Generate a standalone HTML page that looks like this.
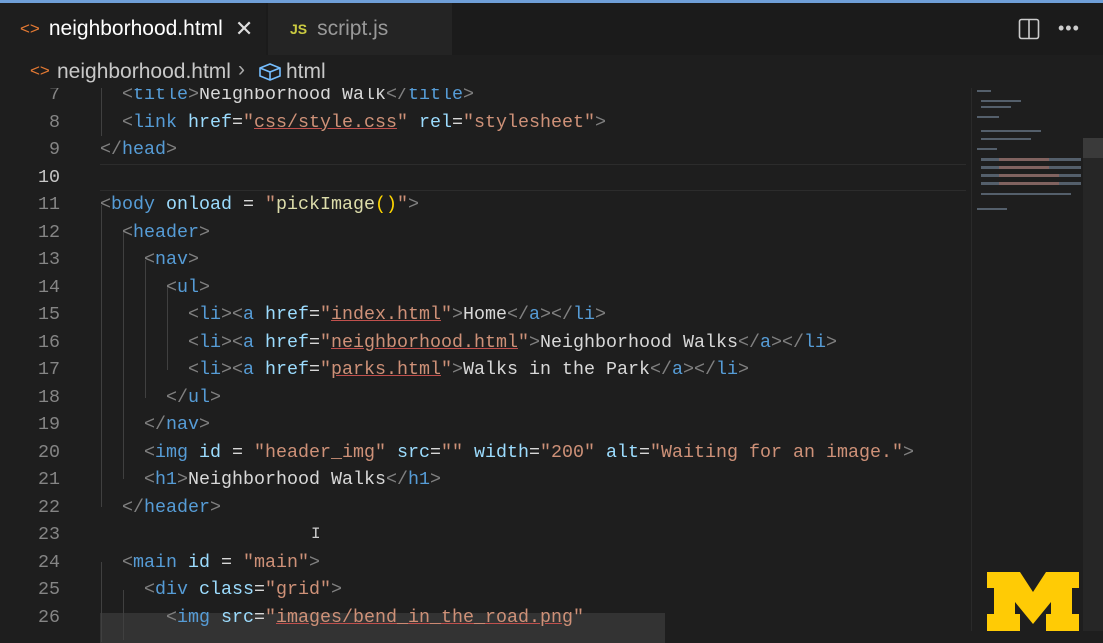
<!DOCTYPE html>
<html><head><meta charset="utf-8"><style>
*{margin:0;padding:0;box-sizing:border-box}
body{width:1103px;height:631px;overflow:hidden;background:#1e1e1e;position:relative;font-family:"Liberation Sans",sans-serif}
#top{position:absolute;left:0;top:0;width:1103px;height:3px;background:#6f9fd8}
#tabs{position:absolute;left:0;top:3px;width:1103px;height:52px;background:#1b1b1b}
.tab{position:absolute;top:0;height:52px;display:flex;align-items:center;font-size:21px}
#code{position:absolute;left:0;top:81px;width:970px;height:560px;font-family:"Liberation Mono",monospace;font-size:18.33px}
.l{position:absolute;left:0;height:27.5px;line-height:27.5px;white-space:pre;width:970px}
.n{position:absolute;left:0;width:60px;text-align:right;color:#858585}
.c{position:absolute;left:100px;color:#d8d8d8}
.b{color:#808080}.t{color:#569cd6}.a{color:#9cdcfe}.s{color:#ce9178}.f{color:#dcdcaa}.p{color:#ffd700}
.u{text-decoration:underline;text-decoration-color:#c0504d}
#bc{position:absolute;left:0;top:55px;width:1103px;height:33px;background:#1e1e1e;font-size:21px;color:#c8c8c8}
.g{position:absolute;width:1px;background:#404040}
</style></head><body>
<div id="code">
<div class="l" style="top:0"><span class="n">7</span><span class="c">  <span class="b">&lt;</span><span class="t">title</span><span class="b">&gt;</span>Neighborhood Walk<span class="b">&lt;/</span><span class="t">title</span><span class="b">&gt;</span></span></div>
<div class="l" style="top:27.5px"><span class="n">8</span><span class="c">  <span class="b">&lt;</span><span class="t">link</span> <span class="a">href</span>=<span class="s">"<span class="u">css/style.css</span>"</span> <span class="a">rel</span>=<span class="s">"stylesheet"</span><span class="b">&gt;</span></span></div>
<div class="l" style="top:55px"><span class="n">9</span><span class="c"><span class="b">&lt;/</span><span class="t">head</span><span class="b">&gt;</span></span></div>
<div class="l" style="top:82.5px;"><div style="position:absolute;left:100px;top:0;width:866px;height:27.5px;border-top:1px solid #2c2c2c;border-bottom:1px solid #2c2c2c"></div><span class="n" style="color:#c6c6c6">10</span></div>
<div class="l" style="top:110px"><span class="n">11</span><span class="c"><span class="b">&lt;</span><span class="t">body</span> <span class="a">onload</span> = <span class="s">"</span><span class="f">pickImage</span><span class="p">()</span><span class="s">"</span><span class="b">&gt;</span></span></div>
<div class="l" style="top:137.5px"><span class="n">12</span><span class="c">  <span class="b">&lt;</span><span class="t">header</span><span class="b">&gt;</span></span></div>
<div class="l" style="top:165px"><span class="n">13</span><span class="c">    <span class="b">&lt;</span><span class="t">nav</span><span class="b">&gt;</span></span></div>
<div class="l" style="top:192.5px"><span class="n">14</span><span class="c">      <span class="b">&lt;</span><span class="t">ul</span><span class="b">&gt;</span></span></div>
<div class="l" style="top:220px"><span class="n">15</span><span class="c">        <span class="b">&lt;</span><span class="t">li</span><span class="b">&gt;&lt;</span><span class="t">a</span> <span class="a">href</span>=<span class="s">"<span class="u">index.html</span>"</span><span class="b">&gt;</span>Home<span class="b">&lt;/</span><span class="t">a</span><span class="b">&gt;&lt;/</span><span class="t">li</span><span class="b">&gt;</span></span></div>
<div class="l" style="top:247.5px"><span class="n">16</span><span class="c">        <span class="b">&lt;</span><span class="t">li</span><span class="b">&gt;&lt;</span><span class="t">a</span> <span class="a">href</span>=<span class="s">"<span class="u">neighborhood.html</span>"</span><span class="b">&gt;</span>Neighborhood Walks<span class="b">&lt;/</span><span class="t">a</span><span class="b">&gt;&lt;/</span><span class="t">li</span><span class="b">&gt;</span></span></div>
<div class="l" style="top:275px"><span class="n">17</span><span class="c">        <span class="b">&lt;</span><span class="t">li</span><span class="b">&gt;&lt;</span><span class="t">a</span> <span class="a">href</span>=<span class="s">"<span class="u">parks.html</span>"</span><span class="b">&gt;</span>Walks in the Park<span class="b">&lt;/</span><span class="t">a</span><span class="b">&gt;&lt;/</span><span class="t">li</span><span class="b">&gt;</span></span></div>
<div class="l" style="top:302.5px"><span class="n">18</span><span class="c">      <span class="b">&lt;/</span><span class="t">ul</span><span class="b">&gt;</span></span></div>
<div class="l" style="top:330px"><span class="n">19</span><span class="c">    <span class="b">&lt;/</span><span class="t">nav</span><span class="b">&gt;</span></span></div>
<div class="l" style="top:357.5px"><span class="n">20</span><span class="c">    <span class="b">&lt;</span><span class="t">img</span> <span class="a">id</span> = <span class="s">"header_img"</span> <span class="a">src</span>=<span class="s">""</span> <span class="a">width</span>=<span class="s">"200"</span> <span class="a">alt</span>=<span class="s">"Waiting for an image."</span><span class="b">&gt;</span></span></div>
<div class="l" style="top:385px"><span class="n">21</span><span class="c">    <span class="b">&lt;</span><span class="t">h1</span><span class="b">&gt;</span>Neighborhood Walks<span class="b">&lt;/</span><span class="t">h1</span><span class="b">&gt;</span></span></div>
<div class="l" style="top:412.5px"><span class="n">22</span><span class="c">  <span class="b">&lt;/</span><span class="t">header</span><span class="b">&gt;</span></span></div>
<div class="l" style="top:440px"><span class="n">23</span><span class="c" style="left:311px;color:#ccc;font-size:16px">I</span></div>
<div class="l" style="top:467.5px"><span class="n">24</span><span class="c">  <span class="b">&lt;</span><span class="t">main</span> <span class="a">id</span> = <span class="s">"main"</span><span class="b">&gt;</span></span></div>
<div class="l" style="top:495px"><span class="n">25</span><span class="c">    <span class="b">&lt;</span><span class="t">div</span> <span class="a">class</span>=<span class="s">"grid"</span><span class="b">&gt;</span></span></div>
<div class="l" style="top:522.5px"><div style="position:absolute;left:100px;top:9px;width:565px;height:30px;background:#333"></div><span class="n">26</span><span class="c">      <span class="b">&lt;</span><span class="t">img</span> <span class="a">src</span>=<span class="s">"<span class="u">images/bend_in_the_road.png</span>"</span></span></div>
<div class="g" style="left:101px;top:124px;height:302px"></div>
<div class="g" style="left:123px;top:151px;height:247px"></div>
<div class="g" style="left:145px;top:179px;height:138px"></div>
<div class="g" style="left:167px;top:206px;height:83px"></div>
<div class="g" style="left:101px;top:0;height:55px"></div>
<div class="g" style="left:101px;top:481px;height:80px"></div>
<div class="g" style="left:123px;top:509px;height:50px"></div>
</div>
<div id="top"></div>
<div id="tabs">
<div class="tab" style="left:0;width:266px;background:#1e1e1e;color:#fff"><span style="color:#e37933;margin-left:20px;font-size:17px">&lt;&gt;</span><span style="margin-left:9px">neighborhood.html</span><span style="margin-left:12px;font-size:22px;color:#ddd">✕</span></div>
<div class="tab" style="left:268px;width:184px;background:#242424;color:#999"><span style="color:#cbcb41;margin-left:22px;font-size:14px;font-weight:bold">JS</span><span style="margin-left:10px">script.js</span></div>
<svg style="position:absolute;left:1018px;top:15px" width="22" height="22"><rect x="1.5" y="1.5" width="19" height="19" rx="2" fill="none" stroke="#ccc" stroke-width="1.6"/><line x1="11" y1="2" x2="11" y2="20" stroke="#ccc" stroke-width="1.6"/></svg>
<div style="position:absolute;left:1058px;top:15px;color:#ccc;font-size:18px;letter-spacing:1px">•••</div>
</div>
<div id="bc"><span style="position:absolute;left:30px;top:6px;color:#e37933;font-size:17px">&lt;&gt;</span><span style="position:absolute;left:57px;top:5px">neighborhood.html</span><span style="position:absolute;left:238px;top:3px;color:#aaa">›</span>
<svg style="position:absolute;left:258px;top:7px" width="24" height="20" viewBox="0 0 24 20"><path d="M2 6 L12 2 L22 6 L22 14 L12 18 L2 14 Z M2 6 L12 10 L22 6 M12 10 L12 18" fill="none" stroke="#75beff" stroke-width="1.6"/></svg>
<span style="position:absolute;left:286px;top:5px">html</span></div>
<div style="position:absolute;left:971px;top:88px;width:1px;height:543px;background:#2a2a2a"></div>
<svg style="position:absolute;left:975px;top:88px" width="110" height="140">
<g fill="#6b7b8c" opacity=".7"><rect x="2" y="2" width="14" height="2"/><rect x="6" y="12" width="40" height="2"/><rect x="6" y="18" width="30" height="2"/><rect x="2" y="28" width="22" height="2"/><rect x="6" y="42" width="60" height="2"/><rect x="6" y="50" width="50" height="2"/><rect x="2" y="60" width="20" height="2"/><rect x="6" y="70" width="100" height="3"/><rect x="6" y="78" width="100" height="3"/><rect x="6" y="86" width="100" height="3"/><rect x="6" y="94" width="100" height="3"/><rect x="6" y="105" width="90" height="2"/><rect x="2" y="120" width="30" height="2"/></g>
<g fill="#a0665a" opacity=".6"><rect x="24" y="70" width="50" height="3"/><rect x="24" y="78" width="50" height="3"/><rect x="24" y="86" width="60" height="3"/><rect x="24" y="94" width="60" height="3"/></g></svg>
<div style="position:absolute;left:1083px;top:138px;width:20px;height:20px;background:#3a3a3a"></div>
<div style="position:absolute;left:1083px;top:158px;width:20px;height:473px;background:#262626"></div>
<svg style="position:absolute;left:986px;top:572px" width="94" height="59" viewBox="0 0 94 59"><path d="M1 0 H34 L47 20 L60 0 H93 V16 H86 V42 H93 V59 H60 V42 H65 V30 L47 52 L29 30 V42 H34 V59 H1 V42 H8 V16 H1 Z" fill="#ffcb05"/></svg>
</body></html>
